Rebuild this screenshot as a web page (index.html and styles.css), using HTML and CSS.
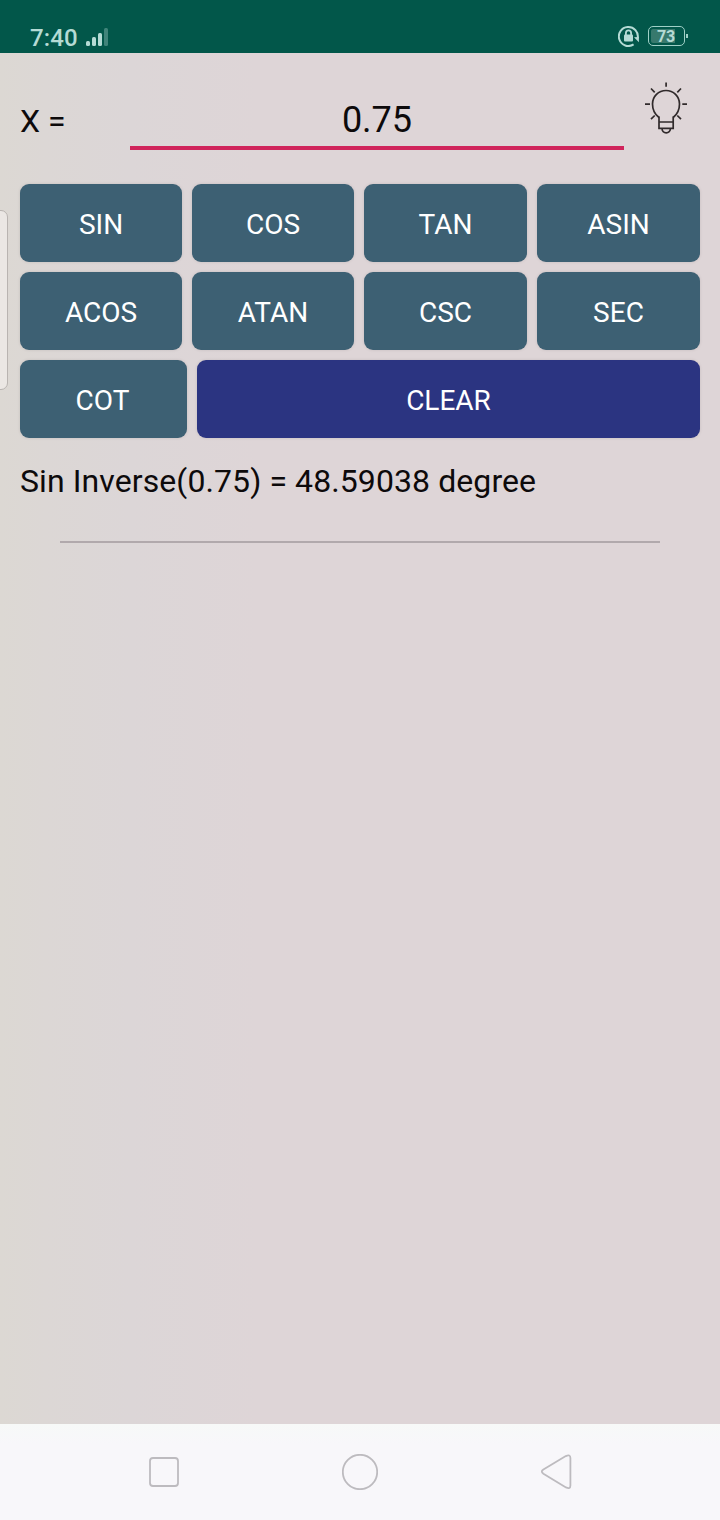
FILE: index.html
```html
<!DOCTYPE html>
<html lang="en">
<head>
<meta charset="utf-8">
<title>Trigonometry Calculator</title>
<link rel="stylesheet" href="styles.css">
</head>
<body>
<div class="screen">
  <header class="status">
    <div class="status-left">
      <span class="time">7:40</span>
      <svg class="signal" width="23" height="18" viewBox="0 0 23 18">
        <rect x="0" y="13" width="4" height="5" rx="1.5"/>
        <rect x="6" y="9" width="4" height="9" rx="1.5"/>
        <rect x="12" y="5" width="4" height="13" rx="1.5"/>
        <rect class="faint" x="18" y="0" width="4" height="18" rx="1.5"/>
      </svg>
    </div>
    <div class="status-right">
      <svg class="lock" width="22" height="22" viewBox="0 0 22 22">
        <path class="ring" d="M15.6 19.4A9.5 9.5 0 1 1 19.7 13.2"/>
        <path class="solid" d="M16 12.3L20.9 11.9L20.9 17.2Z"/>
        <rect class="solid" x="6" y="9.6" width="9" height="6.8" rx="1"/>
        <path class="shackle" d="M7.9 10V7.9a2.6 2.6 0 0 1 5.2 0V10"/>
      </svg>
      <div class="battery"><span class="level">73</span></div>
      <span class="battery-tip"></span>
    </div>
  </header>
  <main class="content">
    <div class="input-row">
      <span class="label">X =</span>
      <div class="field">0.75</div>
      <svg class="bulb" width="44" height="54" viewBox="0 0 44 54">
        <path d="M15 35.5C11 32.5 8.5 28.5 8.5 22A13.5 13.5 0 0 1 35.5 22C35.5 28.5 33 32.5 29.2 35.5"/>
        <path d="M15 34.6V46.4H29.2V34.6M15 40H29.2M18 46.6a4.2 4.2 0 0 0 8.4 0"/>
        <path d="M22.1 0.5V4.8M7 6.5L10.7 10.3M37 6.5L33.3 10.3M1 22.1H6M38.3 22.1H43M7 37.2L10.7 33.5M37 37.2L33.3 33.5"/>
      </svg>
    </div>
    <div class="keys">
      <div class="key">SIN</div><div class="key">COS</div><div class="key">TAN</div><div class="key">ASIN</div>
      <div class="key">ACOS</div><div class="key">ATAN</div><div class="key">CSC</div><div class="key">SEC</div>
    </div>
    <div class="last-row">
      <div class="key cot">COT</div><div class="key clear">CLEAR</div>
    </div>
    <p class="result">Sin Inverse(0.75) = 48.59038 degree</p>
    <div class="divider"></div>
  </main>
  <nav class="nav">
    <svg width="36" height="36" viewBox="0 0 36 36"><rect x="4" y="4" width="28" height="28" rx="3"/></svg>
    <svg width="36" height="36" viewBox="0 0 36 36"><circle cx="18" cy="18" r="17.2"/></svg>
    <svg width="36" height="36" viewBox="0 0 36 36"><path d="M5.4 15.5L27.8 2.1Q32.4 0 32.4 4V31.5Q32.4 35.5 28 33.4L5.4 19.7Q2.2 17.6 5.4 15.5Z"/></svg>
  </nav>
  <div class="edge-handle"></div>
</div>
</body>
</html>
```

FILE: styles.css
```css
* { box-sizing: border-box; }
body { margin: 0; font-family: Roboto, "Liberation Sans", sans-serif; }
.screen {
  position: relative;
  display: flex;
  flex-direction: column;
  width: 720px;
  height: 1520px;
  overflow: hidden;
  background: linear-gradient(90deg, #dcd8d3 0, #dcd7d5 45px, #dcd6d7 130px, #ded5d7 260px, #ded5d7 100%);
}
.status {
  display: flex;
  justify-content: space-between;
  height: 53px;
  padding: 25px 32px 0 30px;
  background: #02574a;
  color: #b5dbd5;
}
.status-left, .status-right { display: flex; align-items: flex-start; }
.time { font-size: 24px; line-height: 26px; width: 56px; font-weight: 500; letter-spacing: 0.1px; }
.signal { margin-top: 3px; fill: #b5dbd5; }
.faint { opacity: .35; }
.lock { margin-right: 8px; fill: none; stroke: #b5dbd5; }
.ring { stroke-width: 2; }
.shackle { stroke-width: 1.8; }
.solid { fill: #b5dbd5; stroke: none; }
.battery {
  width: 37px;
  height: 20px;
  margin-top: 1px;
  padding: 2px;
  border: 1px solid #9fd0c7;
  border-radius: 5px;
}
.level {
  display: block;
  width: 24px;
  height: 14px;
  padding-left: 6px;
  border-radius: 2px 0 0 2px;
  background: #37796d;
  font-size: 16px;
  font-weight: 700;
  line-height: 15px;
  letter-spacing: -0.3px;
}
.battery-tip { width: 2px; height: 4px; margin: 9px 0 0 1px; background: #9fd0c7; }
.content { flex: 1; padding: 30px 20px 0; color: #0d0a0b; }
.input-row { display: flex; height: 101px; }
.label { width: 110px; padding-top: 19px; font-size: 32px; line-height: 38px; }
.field {
  width: 494px;
  height: 67px;
  padding-top: 16px;
  border-bottom: 4px solid #d0245b;
  font-size: 36px;
  line-height: 42px;
  text-align: center;
}
.bulb { margin: -1px 0 0 20px; fill: none; stroke: #302a2b; stroke-width: 1.7; }
.keys { display: grid; grid-template-columns: 162px 162px 163px 163px; gap: 10px; }
.key {
  display: flex;
  align-items: center;
  justify-content: center;
  height: 78px;
  padding-top: 2px;
  border-radius: 9px;
  background: #3d6073;
  box-shadow: 0 0 3px rgba(80, 60, 70, .16);
  color: #fff;
  font-size: 28px;
}
.last-row { display: flex; gap: 10px; margin-top: 10px; }
.cot { width: 167px; padding-right: 2px; }
.clear { flex: 1; background: #2b3481; }
.result { margin: 24px 0 0; font-size: 32px; line-height: 38px; letter-spacing: 0.09px; white-space: nowrap; }
.divider { height: 2px; margin: 41px 40px 0; background: #b1a9ac; }
.nav {
  display: flex;
  justify-content: space-between;
  height: 96px;
  padding: 30px 146px 0;
  background: linear-gradient(#f7f9f8 0, #f8f7fa 20px);
}
.nav svg { fill: none; stroke: #bdbbbf; stroke-width: 1.8; }
.edge-handle {
  position: absolute;
  left: -12px;
  top: 210px;
  width: 20px;
  height: 180px;
  border: 1px solid #b9b4b1;
  border-radius: 7px;
  background: #ebe7e4;
}
```
